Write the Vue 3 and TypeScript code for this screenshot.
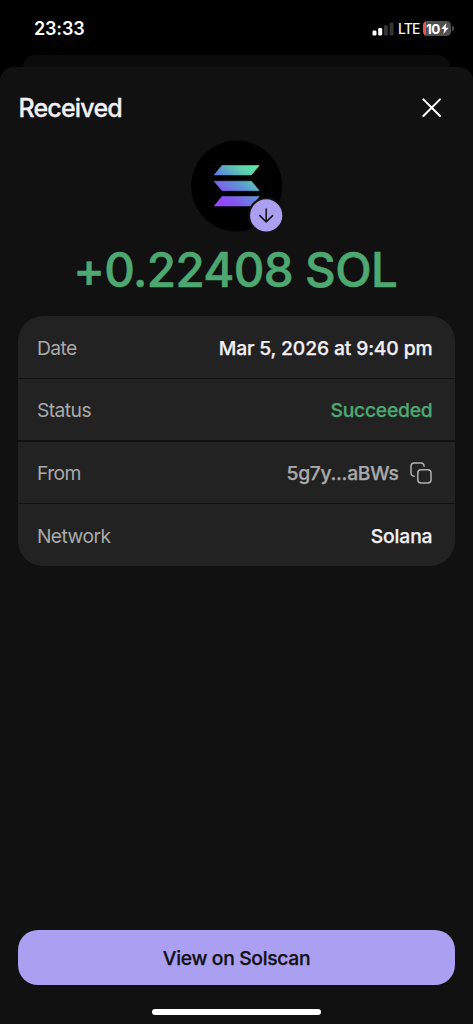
<script setup lang="ts">
interface Detail {
  label: string
  value: string
  tone: 'plain' | 'success' | 'muted' | 'network'
  copyable?: boolean
}

const details: Detail[] = [
  { label: 'Date', value: 'Mar 5, 2026 at 9:40 pm', tone: 'plain' },
  { label: 'Status', value: 'Succeeded', tone: 'success' },
  { label: 'From', value: '5g7y...aBWs', tone: 'muted', copyable: true },
  { label: 'Network', value: 'Solana', tone: 'network' },
]
</script>

<template>
  <div class="screen">
    <header class="status-bar">
      <span class="clock">23:33</span>
      <div class="indicators">
        <svg class="signal" width="22" height="14" viewBox="0 0 22 14">
          <rect x="0.5" y="8.5" width="4" height="5" rx="1.2" fill="#fff" />
          <rect x="6.2" y="6" width="4" height="7.5" rx="1.2" fill="#fff" />
          <rect x="11.9" y="3.2" width="4" height="10.3" rx="1.2" fill="#353535" />
          <rect x="17.6" y="0.5" width="4" height="13" rx="1.2" fill="#353535" />
        </svg>
        <span class="carrier">LTE</span>
        <div class="battery">
          <span class="level">10</span>
          <svg class="bolt" width="8" height="11" viewBox="0 0 8 11">
            <path d="M5.4 0 0.3 6.1h3L2.3 11 7.7 4.7H4.6z" fill="#fff" />
          </svg>
        </div>
        <span class="battery-tip"></span>
      </div>
    </header>

    <div class="back-sheet"></div>
    <main class="sheet">
      <div class="title-row">
        <h1 class="title">Received</h1>
        <button class="close" aria-label="Close">
          <svg width="20" height="20" viewBox="0 0 20 20" fill="none" stroke="#fff" stroke-width="2" stroke-linecap="round">
            <path d="M1.4 1.4 18 18M18 1.4 1.4 18" />
          </svg>
        </button>
      </div>

      <div class="coin">
        <svg class="coin-art" width="92" height="92" viewBox="0 0 92 92">
          <defs>
            <linearGradient id="sol" gradientUnits="userSpaceOnUse" x1="30" y1="68" x2="64" y2="22">
              <stop offset="0" stop-color="#9945ff" />
              <stop offset="0.2" stop-color="#8752f3" />
              <stop offset="0.5" stop-color="#5f90d8" />
              <stop offset="0.7" stop-color="#5cc4b4" />
              <stop offset="1" stop-color="#62f0a2" />
            </linearGradient>
          </defs>
          <circle cx="45.7" cy="46" r="45.5" fill="#000" />
          <g fill="url(#sol)" stroke="url(#sol)" stroke-width="0.6" stroke-linejoin="round">
            <path d="M31 25.5H68.2L60.4 34.9H23.2Z" />
            <path d="M23.2 41.2H60.4L68.2 50.7H31Z" />
            <path d="M31 56.5H68.2L60.4 66H23.2Z" />
          </g>
          <circle cx="75.2" cy="75.4" r="18.2" fill="#111" />
          <circle cx="75.2" cy="75.4" r="16.1" fill="#ab9ff2" />
          <path d="M75.2 69.1V81.4M68.8 75.6 75.2 81.9 81.6 75.6" fill="none" stroke="#121216" stroke-width="1.5" stroke-linecap="round" stroke-linejoin="round" />
        </svg>
      </div>

      <div class="amount">+0.22408 SOL</div>

      <section class="details">
        <div v-for="item in details" :key="item.label" class="row">
          <span class="label">{{ item.label }}</span>
          <span class="value" :class="item.tone">
            <span>{{ item.value }}</span>
            <svg v-if="item.copyable" class="copy" width="22" height="22" viewBox="0 0 22 22" fill="none" stroke="#b0b0b0" stroke-width="1.5" stroke-linecap="round" stroke-linejoin="round">
              <rect x="7.8" y="7.8" width="13.2" height="13.2" rx="3.2" />
              <path d="M4.2 14.2C2.2 14.2 1 12.8 1 11V4.2C1 2.4 2.4 1 4.2 1H11C12.8 1 14 2.3 14.1 4.2" />
            </svg>
          </span>
        </div>
      </section>

      <button class="explorer">View on Solscan</button>
      <div class="home-indicator"></div>
    </main>
  </div>
</template>

<style>
body {
  margin: 0;
  background: #000;
}
</style>

<style scoped>
.screen {
  width: 473px;
  height: 1024px;
  display: flex;
  flex-direction: column;
  overflow: hidden;
  background: #000;
  color: #f2f0f4;
  font-family: Inter, "Liberation Sans", sans-serif;
}
.status-bar {
  height: 55px;
  box-sizing: border-box;
  padding: 2px 19.5px 0 34px;
  display: flex;
  align-items: center;
  justify-content: space-between;
}
.clock {
  font-size: 18px;
  font-weight: 600;
  letter-spacing: -0.15px;
  color: #fff;
}
.indicators {
  display: flex;
  align-items: center;
}
.signal {
  margin-right: 4px;
}
.carrier {
  width: 20px;
  margin-right: 5px;
  font-size: 14px;
  font-weight: 500;
  letter-spacing: -0.9px;
  white-space: nowrap;
  color: #f4f4f4;
}
.battery {
  width: 28px;
  height: 15px;
  border-radius: 4.5px;
  background: linear-gradient(90deg, #e9564a 0 3px, #505050 3px);
  display: flex;
  align-items: center;
  justify-content: center;
}
.level {
  margin-left: 1px;
  font-size: 13.5px;
  font-weight: 700;
  letter-spacing: -0.5px;
  color: #fff;
}
.bolt {
  margin-left: 1px;
}
.battery-tip {
  width: 1.5px;
  height: 5px;
  margin-left: 1px;
  border-radius: 0 2px 2px 0;
  background: #505050;
}
.back-sheet {
  height: 12px;
  flex: none;
  margin: 0 23px;
  border-radius: 12px 12px 0 0;
  background: #0b0b0b;
}
.sheet {
  flex: 1;
  box-sizing: border-box;
  padding: 0 18.4px;
  border-radius: 14px 14px 0 0;
  background: #111;
  display: flex;
  flex-direction: column;
}
.title-row {
  height: 73px;
  padding: 9px 12.6px 0 0;
  box-sizing: border-box;
  display: flex;
  align-items: center;
  justify-content: space-between;
}
.title {
  margin: 0;
  font-size: 25px;
  font-weight: 500;
  letter-spacing: -0.8px;
  -webkit-text-stroke: 0.3px currentColor;
}
.close {
  display: flex;
  padding: 0;
  border: 0;
  background: none;
}
.coin {
  height: 92px;
  display: flex;
  justify-content: center;
}
.coin-art {
  overflow: visible;
}
.amount {
  height: 84px;
  line-height: 76px;
  margin-right: 2.6px;
  text-align: center;
  white-space: nowrap;
  font-size: 47.5px;
  font-weight: 500;
  letter-spacing: -0.65px;
  -webkit-text-stroke: 0.6px currentColor;
  color: #4da872;
}
.details {
  height: 250px;
  flex: none;
  display: grid;
  grid-template-rows: repeat(4, 1fr);
  gap: 1.3px;
  border-radius: 25px;
  overflow: hidden;
  background: #111;
}
.row {
  padding: 1.5px 22.2px 0 18.5px;
  background: #222;
  display: flex;
  align-items: center;
  justify-content: space-between;
  font-size: 19.3px;
}
.label {
  color: #aaa;
  letter-spacing: -0.55px;
}
.value {
  display: flex;
  align-items: center;
  gap: 11px;
  font-weight: 500;
  letter-spacing: -0.14px;
  -webkit-text-stroke: 0.25px currentColor;
}
.success {
  color: #4da872;
  letter-spacing: -0.25px;
}
.muted {
  color: #aaa;
  letter-spacing: -0.3px;
}
.copy {
  margin-right: 0.8px;
}
.explorer {
  height: 55px;
  margin-top: auto;
  padding: 0;
  border: 0;
  border-radius: 20px;
  background: #ab9ff2;
  color: #111116;
  font: 500 19.3px Inter, "Liberation Sans", sans-serif;
  letter-spacing: -0.33px;
  -webkit-text-stroke: 0.25px currentColor;
}
.home-indicator {
  width: 169px;
  height: 6px;
  margin: 23.5px auto 9.5px;
  border-radius: 3px;
  background: #fff;
}
</style>
